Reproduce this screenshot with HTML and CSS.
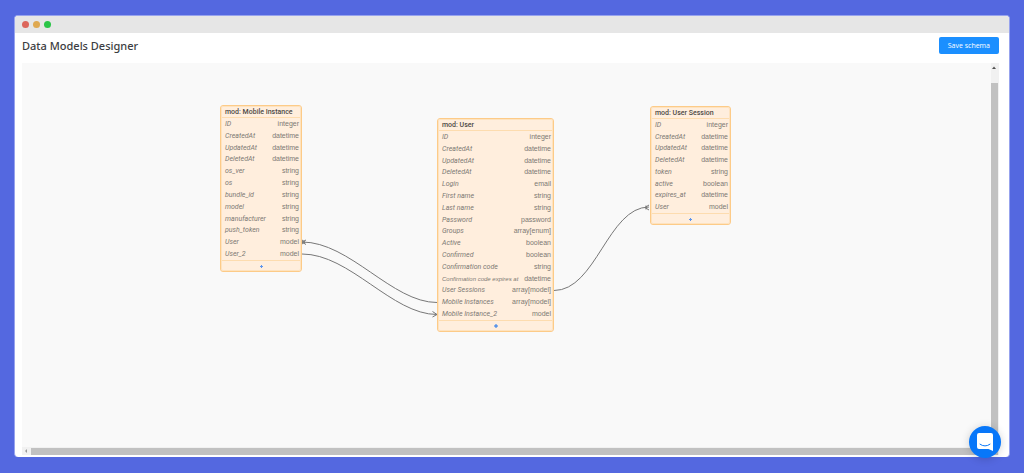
FILE: index.html
```
<!DOCTYPE html>
<html lang="en">
<head>
<meta charset="utf-8">
<title>Data Models Designer</title>
<link rel="stylesheet" href="styles.css">
</head>
<body>
<div class="window">
  <div class="titlebar"><span class="dot dot-red"></span><span class="dot dot-amber"></span><span class="dot dot-green"></span></div>
  <header class="header">
    <h1 class="title">Data Models Designer</h1>
    <button class="save" type="button">Save schema</button>
  </header>
  <main class="designer">
    <div class="canvas">
      <section class="node node-mobile">
        <h2 class="node-title">mod: Mobile Instance</h2>
        <ul class="fields">
          <li><i>ID</i><span>integer</span></li>
          <li><i>CreatedAt</i><span>datetime</span></li>
          <li><i>UpdatedAt</i><span>datetime</span></li>
          <li><i>DeletedAt</i><span>datetime</span></li>
          <li><i>os_ver</i><span>string</span></li>
          <li><i>os</i><span>string</span></li>
          <li><i>bundle_id</i><span>string</span></li>
          <li><i>model</i><span>string</span></li>
          <li><i>manufacturer</i><span>string</span></li>
          <li><i>push_token</i><span>string</span></li>
          <li><i>User</i><span>model</span></li>
          <li><i>User_2</i><span>model</span></li>
        </ul>
        <button class="add" type="button" aria-label="Add field"><svg width="3" height="3" viewBox="0 0 3 3"><path d="M0 1.5H3M1.5 0V3"/></svg></button>
      </section>
      <section class="node node-user">
        <h2 class="node-title">mod: User</h2>
        <ul class="fields">
          <li><i>ID</i><span>integer</span></li>
          <li><i>CreatedAt</i><span>datetime</span></li>
          <li><i>UpdatedAt</i><span>datetime</span></li>
          <li><i>DeletedAt</i><span>datetime</span></li>
          <li><i>Login</i><span>email</span></li>
          <li><i>First name</i><span>string</span></li>
          <li><i>Last name</i><span>string</span></li>
          <li><i>Password</i><span>password</span></li>
          <li><i>Groups</i><span>array[enum]</span></li>
          <li><i>Active</i><span>boolean</span></li>
          <li><i>Confirmed</i><span>boolean</span></li>
          <li><i>Confirmation code</i><span>string</span></li>
          <li class="tight"><i>Confirmation code expires at</i><span>datetime</span></li>
          <li><i>User Sessions</i><span>array[model]</span></li>
          <li><i>Mobile Instances</i><span>array[model]</span></li>
          <li><i>Mobile Instance_2</i><span>model</span></li>
        </ul>
        <button class="add add-strong" type="button" aria-label="Add field"><svg width="4" height="4" viewBox="0 0 4 4"><path d="M0 2H4M2 0V4"/></svg></button>
      </section>
      <section class="node node-session">
        <h2 class="node-title">mod: User Session</h2>
        <ul class="fields">
          <li><i>ID</i><span>integer</span></li>
          <li><i>CreatedAt</i><span>datetime</span></li>
          <li><i>UpdatedAt</i><span>datetime</span></li>
          <li><i>DeletedAt</i><span>datetime</span></li>
          <li><i>token</i><span>string</span></li>
          <li><i>active</i><span>boolean</span></li>
          <li><i>expires_at</i><span>datetime</span></li>
          <li><i>User</i><span>model</span></li>
        </ul>
        <button class="add" type="button" aria-label="Add field"><svg width="3" height="3" viewBox="0 0 3 3"><path d="M0 1.5H3M1.5 0V3"/></svg></button>
      </section>
      <svg class="edges" width="968" height="384" viewBox="22 63 968 384" aria-hidden="true">
        <path d="M437 302.5C392 302.5 350 242 302 242"/>
        <path d="M302 254C350 254 392 314.5 437 314.5"/>
        <path d="M554 290.5C596 290.5 608 207 649 207"/>
        <path d="M306 240L302 242L306 244.500M302 240L305 242L302 244"/>
        <path d="M432.500 311.500L437 314.500L432.500 317"/>
        <path d="M649 205L645 207.500L649 210M646 205.500V209.500"/>
      </svg>
    </div>
    <div class="vbar"><svg class="arrow" width="8" height="8" viewBox="0 0 8 8"><path d="M1 6L3 3.500L5 6Z"/></svg><span class="vthumb"></span></div>
    <div class="hbar"><svg class="arrow arrow-soft" width="8" height="8" viewBox="0 0 8 8"><path d="M5 2L3 4L5 6Z"/></svg><span class="hthumb"></span></div>
  </main>
</div>
<button class="chat" type="button" aria-label="Open chat">
  <svg width="16" height="18" viewBox="0 0 16 18"><path fill="#fff" d="M2 0H14Q16 0 16 2V18L11.500 16H2Q0 16 0 14V2Q0 0 2 0Z"/><path d="M3 11.200Q8 14.800 13 11.200" fill="none" stroke="#0877f9" stroke-linecap="round"/></svg>
</button>
</body>
</html>
```
FILE: styles.css
```
* { box-sizing: border-box; }
body {
  margin: 0;
  height: 100vh;
  padding: 15px 14px;
  background: #5468e0;
  font-family: Roboto, "Liberation Sans", Arial, sans-serif;
}
button { border: 0; padding: 0; font: inherit; cursor: pointer; }
.window {
  display: flex;
  flex-direction: column;
  height: calc(100% - 1px);
  border: 1px solid #97a3ee;
  border-bottom: 0;
  border-radius: 4px;
  background: #fff;
  overflow: hidden;
}
.titlebar {
  display: flex;
  align-items: center;
  gap: 4px;
  height: 17px;
  padding: 0 7px;
  background: #e6e6e6;
}
.dot { width: 7px; height: 7px; border-radius: 50%; }
.dot-red { background: #dc665b; }
.dot-amber { background: #dfa951; }
.dot-green { background: #2bc548; }
.header {
  display: flex;
  align-items: flex-start;
  justify-content: space-between;
  height: 30px;
  padding: 4px 10px 0 7px;
}
.title {
  margin: 0;
  font: 500 11px/18px "Noto Sans", "Open Sans", sans-serif;
  color: #3c3d42;
}
.save {
  height: 17px;
  padding: 0 9px;
  border-radius: 2px;
  background: #1b8fff;
  color: #fff;
  font: 7px/17px "Open Sans", "Noto Sans", sans-serif;
}
.designer {
  display: grid;
  grid-template: minmax(0, 1fr) 8px / minmax(0, 1fr) 8px;
  flex: 1;
  min-height: 0;
  margin: 0 10px 2px 7px;
  background: #f9f9f9;
}
.canvas { position: relative; overflow: hidden; }
.vbar {
  grid-row: 1 / 3;
  grid-column: 2;
  display: flex;
  flex-direction: column;
  gap: 12px;
  background: #f1f1f1;
}
.vthumb { flex: 1; margin-right: 1px; background: #c1c1c1; }
.hbar { grid-row: 2; grid-column: 1; display: flex; background: #f1f1f1; }
.hthumb { flex: 1; margin: 1px 0 0 1px; background: #c1c1c1; }
.arrow { display: block; fill: #505050; }
.arrow-soft { fill: #999; }
.node {
  position: absolute;
  display: flex;
  flex-direction: column;
  border: 1px solid #fdcb88;
  outline: 1px solid #fee3bf;
  outline-offset: -2px;
  border-radius: 3px;
  background: #ffeedd;
  color: #7d7974;
  font-size: 7px;
  line-height: 10px;
  white-space: nowrap;
}
.node-mobile { left: 198px; top: 42px; width: 82px; height: 167px; }
.node-user { left: 415px; top: 55px; width: 117px; height: 214px; }
.node-session { left: 628px; top: 43px; width: 81px; height: 119px; }
.node-title {
  height: 12px;
  margin: 0;
  padding: 0 4px;
  border-bottom: 1px solid #fddcaf;
  color: #4d4945;
  font-size: 7px;
  font-weight: 500;
  line-height: 12px;
}
.fields {
  display: grid;
  grid-template-columns: minmax(0, 1fr);
  grid-auto-rows: minmax(0, 1fr);
  flex: 1;
  min-height: 0;
  margin: 0;
  padding: 0 2px 0 4px;
  list-style: none;
}
.fields li { display: flex; align-items: center; justify-content: space-between; }
.fields i { min-width: 0; }
.fields span,
.fields .tight i { font-family: "Liberation Sans", Arial, sans-serif; }
.fields .tight i { font-size: 6px; }
.add {
  display: flex;
  align-items: center;
  justify-content: center;
  height: 11px;
  border-top: 1px solid #fddcaf;
  background: none;
}
.add svg { stroke: #5b94ee; }
.add-strong svg { stroke: #2479ee; }
.edges { position: absolute; left: 0; top: 0; fill: none; stroke: #777; }
.chat {
  position: fixed;
  right: 23px;
  bottom: 15px;
  display: flex;
  align-items: center;
  justify-content: center;
  width: 32px;
  height: 32px;
  border-radius: 50%;
  background: #0877f9;
  box-shadow: 0 1px 8px rgba(0, 0, 0, 0.18);
}
```
